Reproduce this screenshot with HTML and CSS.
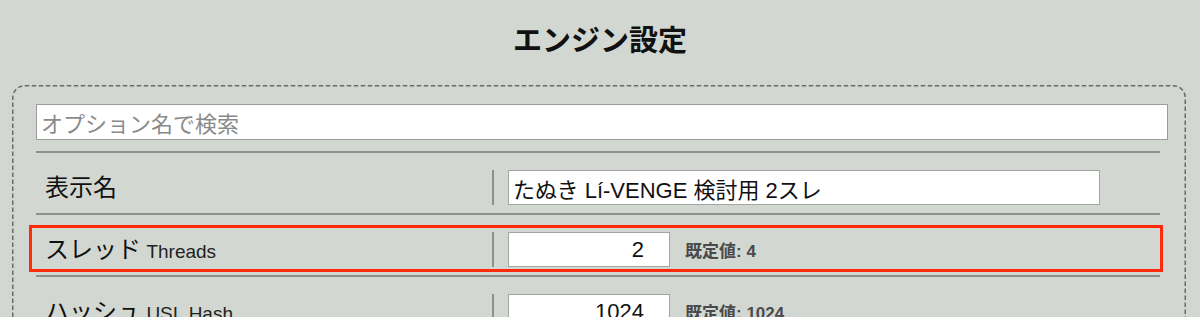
FILE: index.html
```html
<!DOCTYPE html>
<html lang="ja">
<head>
<meta charset="utf-8">
<title>エンジン設定</title>
<link rel="stylesheet" href="styles.css">
</head>
<body>
<h1 class="title">エンジン設定</h1>
<div class="panel">
  <svg class="frame" aria-hidden="true"><rect></rect></svg>
  <input class="search" type="text" placeholder="オプション名で検索">
  <div class="sep first"></div>
  <div class="row">
    <div class="label">表示名</div>
    <div class="divider"></div>
    <input class="field wide" type="text" value="たぬき Lí-VENGE 検討用 2スレ">
  </div>
  <div class="sep"></div>
  <div class="row highlight">
    <div class="label">スレッド <span class="sub">Threads</span></div>
    <div class="divider"></div>
    <input class="field num" type="text" value="2">
    <span class="default">既定値: 4</span>
  </div>
  <div class="sep"></div>
  <div class="row">
    <div class="label">ハッシュ <span class="sub">USI_Hash</span></div>
    <div class="divider"></div>
    <input class="field num" type="text" value="1024">
    <span class="default">既定値: 1024</span>
  </div>
</div>
</body>
</html>
```
FILE: styles.css
```css
html, body {
  margin: 0;
  padding: 0;
}
body {
  background: #d2d8d1;
  font-family: "Liberation Sans", "Noto Sans CJK JP", sans-serif;
  color: #111;
  overflow: hidden;
}
.title {
  margin: 0;
  padding-top: 18px;
  height: 85px;
  box-sizing: border-box;
  text-align: center;
  font-size: 29px;
  line-height: 40px;
  font-weight: bold;
  font-family: "Noto Sans CJK JP", sans-serif;
  color: #111;
}
.panel {
  position: relative;
  margin: 0 14px 0 12px;
  padding: 19px 18px 40px 24px;
}
.frame {
  position: absolute;
  top: 0;
  left: 0;
  width: 100%;
  height: 100%;
  pointer-events: none;
  overflow: visible;
}
.frame rect {
  x: 0.75px;
  y: 0.75px;
  width: calc(100% - 1.5px);
  height: calc(100% - 1.5px);
  rx: 12px;
  ry: 12px;
  fill: none;
  stroke: #686c68;
  stroke-width: 1.5px;
  stroke-dasharray: 4.5 2.5;
}
.search {
  position: relative;
  display: block;
  width: 100%;
  height: 36px;
  box-sizing: border-box;
  margin: 0;
  border: 1px solid #9a9c9a;
  background: #fff;
  padding: 0 4px;
  font-family: "Noto Sans CJK JP", sans-serif;
  font-size: 22px;
  color: #222;
  outline: none;
}
.search::placeholder {
  color: #8a8a8a;
}
.sep {
  height: 2px;
  background: #8c918c;
  margin: 0 8px 0 0;
}
.sep.first {
  margin-top: 11px;
}
.row {
  display: flex;
  align-items: center;
  margin: 10px 5px 3px -7px;
  border: 3px solid transparent;
  padding: 4px 0 2px 13px;
}
.row.highlight {
  border-color: #ff2a0c;
}
.label {
  flex: none;
  width: 447px;
  height: 35px;
  box-sizing: border-box;
  padding-bottom: 4px;
  font-family: "Noto Sans CJK JP", sans-serif;
  font-size: 24px;
  color: #111;
  line-height: 31px;
  white-space: nowrap;
}
.sub {
  font-family: "Liberation Sans", "Noto Sans CJK JP", sans-serif;
  font-size: 19px;
  line-height: 1;
  color: #222;
}
.divider {
  flex: none;
  width: 2px;
  height: 35px;
  background: #8c918c;
  margin-right: 14px;
}
.field {
  flex: none;
  height: 35px;
  box-sizing: border-box;
  margin: 0;
  border: 1px solid #a3a5a3;
  background: #fff;
  font-family: "Liberation Sans", "Noto Sans CJK JP", sans-serif;
  font-size: 22px;
  color: #111;
  outline: none;
}
.field.wide {
  width: 592px;
  padding: 0 4px;
}
.field.num {
  width: 162px;
  text-align: right;
  padding: 0 25px 0 4px;
}
.default {
  margin-left: 15px;
  font-family: "Liberation Sans", "Noto Sans CJK JP", sans-serif;
  font-size: 17px;
  font-weight: bold;
  color: #4a4a4a;
}
```
